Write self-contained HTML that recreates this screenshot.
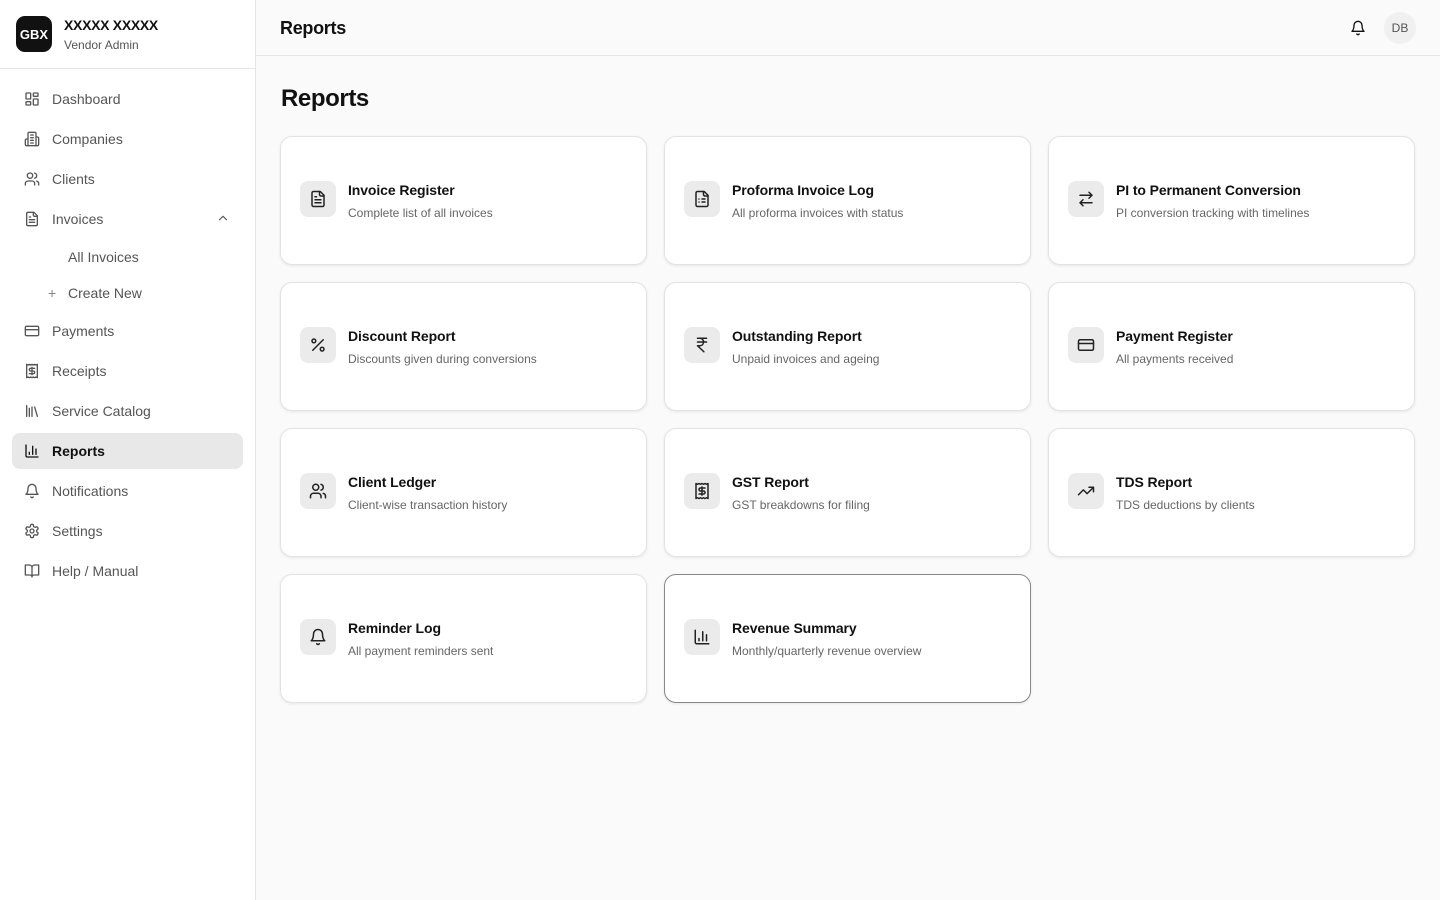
<!DOCTYPE html>
<html><head><meta charset="utf-8"><style>
*{box-sizing:border-box;margin:0;padding:0}
body{width:1440px;height:900px;font-family:"Liberation Sans",sans-serif;background:#fafafa;color:#111;position:relative;overflow:hidden}
.side{position:absolute;left:0;top:0;width:256px;height:900px;background:#fff;border-right:1px solid #e5e5e5}
.brand{height:69px;border-bottom:1px solid #e5e5e5;position:relative}
.logo{position:absolute;left:16px;top:16px;width:36px;height:36px;border-radius:9px;background:#111;color:#fff;font-weight:bold;font-size:13px;display:flex;align-items:center;justify-content:center}
.bn{position:absolute;left:64px;top:17px;font-size:14px;font-weight:bold;letter-spacing:-0.3px}
.br{position:absolute;left:64px;top:38px;font-size:12px;color:#555}
.nav{position:absolute;left:12px;width:231px;height:36px;border-radius:8px;display:flex;align-items:center;font-size:14px;color:#555}
.nav svg{position:absolute;left:12px;top:10px}
.nav span{position:absolute;left:40px}
.nav.act{background:#e8e8e8;color:#111;font-weight:bold}
svg{fill:none;stroke:currentColor;stroke-width:2;stroke-linecap:round;stroke-linejoin:round}
.top{position:absolute;left:256px;top:0;right:0;height:56px;border-bottom:1px solid #e5e5e5;background:#fafafa}
.top h1{position:absolute;left:24px;top:18px;font-size:18px;font-weight:bold;letter-spacing:-0.3px}
.av{position:absolute;left:1128px;top:12px;width:32px;height:32px;border-radius:50%;background:#f0f0f0;font-size:12px;color:#555;display:flex;align-items:center;justify-content:center}
h2{position:absolute;left:281px;top:85px;font-size:24px;font-weight:bold;letter-spacing:-0.4px}
.card{position:absolute;width:367px;height:129px;background:#fff;border:1px solid #e3e3e3;border-radius:12px;box-shadow:0 1px 3px rgba(0,0,0,.08)}
.card.h{border-color:#888}
.ic{position:absolute;left:19px;top:44px;width:36px;height:36px;border-radius:8px;background:#ebebeb;color:#222}
.ic svg{position:absolute;left:9px;top:9px}
.t{position:absolute;left:67px;top:45px;font-size:14px;font-weight:bold;color:#111;letter-spacing:-0.1px}
.d{position:absolute;left:67px;top:69px;font-size:12px;color:#666}
</style></head><body>
<div class="side">
<div class="brand"><div class="logo">GBX</div><div class="bn">XXXXX XXXXX</div><div class="br">Vendor Admin</div></div>
<div class="nav" style="top:81px"><svg width="16" height="16" viewBox="0 0 24 24"><rect x="3" y="3" width="7" height="9" rx="1"/><rect x="14" y="3" width="7" height="5" rx="1"/><rect x="14" y="12" width="7" height="9" rx="1"/><rect x="3" y="16" width="7" height="5" rx="1"/></svg><span>Dashboard</span></div>
<div class="nav" style="top:121px"><svg width="16" height="16" viewBox="0 0 24 24"><path d="M6 22V4a2 2 0 0 1 2-2h8a2 2 0 0 1 2 2v18Z"/><path d="M6 12H4a2 2 0 0 0-2 2v6a2 2 0 0 0 2 2h2M18 9h2a2 2 0 0 1 2 2v9a2 2 0 0 1-2 2h-2M10 6h4M10 10h4M10 14h4M10 18h4"/></svg><span>Companies</span></div>
<div class="nav" style="top:161px"><svg width="16" height="16" viewBox="0 0 24 24"><path d="M16 21v-2a4 4 0 0 0-4-4H6a4 4 0 0 0-4 4v2"/><circle cx="9" cy="7" r="4"/><path d="M22 21v-2a4 4 0 0 0-3-3.87M16 3.13a4 4 0 0 1 0 7.75"/></svg><span>Clients</span></div>
<div class="nav" style="top:201px"><svg width="16" height="16" viewBox="0 0 24 24"><path d="M15 2H6a2 2 0 0 0-2 2v16a2 2 0 0 0 2 2h12a2 2 0 0 0 2-2V7Z"/><path d="M14 2v4a2 2 0 0 0 2 2h4M10 9H8M16 13H8M16 17H8"/></svg><span>Invoices</span><svg style="left:204px" width="14" height="14" viewBox="0 0 24 24"><path d="m18 15-6-6-6 6"/></svg></div>
<div class="nav" style="top:239px"><span style="left:56px">All Invoices</span></div>
<div class="nav" style="top:275px"><span style="left:36px;color:#888">+</span><span style="left:56px">Create New</span></div>
<div class="nav" style="top:313px"><svg width="16" height="16" viewBox="0 0 24 24"><rect x="2" y="5" width="20" height="14" rx="2"/><path d="M2 10h20"/></svg><span>Payments</span></div>
<div class="nav" style="top:353px"><svg width="16" height="16" viewBox="0 0 24 24"><path d="M4 2v20l2-1 2 1 2-1 2 1 2-1 2 1 2-1 2 1V2l-2 1-2-1-2 1-2-1-2 1-2-1-2 1Z"/><path d="M16 8h-6a2 2 0 1 0 0 4h4a2 2 0 1 1 0 4H8M12 17.5v-11"/></svg><span>Receipts</span></div>
<div class="nav" style="top:393px"><svg width="16" height="16" viewBox="0 0 24 24"><path d="m16 6 4 14M12 6v14M8 8v12M4 4v16"/></svg><span>Service Catalog</span></div>
<div class="nav act" style="top:433px"><svg width="16" height="16" viewBox="0 0 24 24"><path d="M3 3v16a2 2 0 0 0 2 2h16M18 17V9M13 17V5M8 17v-3"/></svg><span>Reports</span></div>
<div class="nav" style="top:473px"><svg width="16" height="16" viewBox="0 0 24 24"><path d="M6 8a6 6 0 0 1 12 0c0 7 3 9 3 9H3s3-2 3-9M10.3 21a1.94 1.94 0 0 0 3.4 0"/></svg><span>Notifications</span></div>
<div class="nav" style="top:513px"><svg width="16" height="16" viewBox="0 0 24 24"><path d="M12.22 2h-.44a2 2 0 0 0-2 2v.18a2 2 0 0 1-1 1.73l-.43.25a2 2 0 0 1-2 0l-.15-.08a2 2 0 0 0-2.73.73l-.22.38a2 2 0 0 0 .73 2.730l.15.1a2 2 0 0 1 1 1.72v.51a2 2 0 0 1-1 1.74l-.15.09a2 2 0 0 0-.73 2.73l.22.38a2 2 0 0 0 2.73.73l.15-.08a2 2 0 0 1 2 0l.43.25a2 2 0 0 1 1 1.73V20a2 2 0 0 0 2 2h.44a2 2 0 0 0 2-2v-.18a2 2 0 0 1 1-1.73l.43-.25a2 2 0 0 1 2 0l.15.08a2 2 0 0 0 2.73-.73l.22-.39a2 2 0 0 0-.73-2.73l-.15-.08a2 2 0 0 1-1-1.74v-.5a2 2 0 0 1 1-1.74l.15-.09a2 2 0 0 0 .73-2.73l-.22-.38a2 2 0 0 0-2.73-.73l-.15.08a2 2 0 0 1-2 0l-.43-.25a2 2 0 0 1-1-1.73V4a2 2 0 0 0-2-2z"/><circle cx="12" cy="12" r="3"/></svg><span>Settings</span></div>
<div class="nav" style="top:553px"><svg width="16" height="16" viewBox="0 0 24 24"><path d="M2 3h6a4 4 0 0 1 4 4v14a3 3 0 0 0-3-3H2zM22 3h-6a4 4 0 0 0-4 4v14a3 3 0 0 1 3-3h7z"/></svg><span>Help / Manual</span></div>
</div>
<div class="top"><h1>Reports</h1>
<svg style="position:absolute;left:1094px;top:20px" width="16" height="16" viewBox="0 0 24 24"><path d="M6 8a6 6 0 0 1 12 0c0 7 3 9 3 9H3s3-2 3-9M10.3 21a1.94 1.94 0 0 0 3.4 0"/></svg>
<div class="av">DB</div></div>
<h2>Reports</h2>

<div class="card" style="left:280px;top:136px"><div class="ic"><svg width="18" height="18" viewBox="0 0 24 24"><path d="M15 2H6a2 2 0 0 0-2 2v16a2 2 0 0 0 2 2h12a2 2 0 0 0 2-2V7Z"/><path d="M14 2v4a2 2 0 0 0 2 2h4M10 9H8M16 13H8M16 17H8"/></svg></div><div class="t">Invoice Register</div><div class="d">Complete list of all invoices</div></div>
<div class="card" style="left:664px;top:136px"><div class="ic"><svg width="18" height="18" viewBox="0 0 24 24"><path d="M15 2H6a2 2 0 0 0-2 2v16a2 2 0 0 0 2 2h12a2 2 0 0 0 2-2V7Z"/><path d="M14 2v4a2 2 0 0 0 2 2h4M8 12h.01M12 12h4M8 16h.01M12 16h4"/></svg></div><div class="t">Proforma Invoice Log</div><div class="d">All proforma invoices with status</div></div>
<div class="card" style="left:1048px;top:136px"><div class="ic"><svg width="18" height="18" viewBox="0 0 24 24"><path d="m16 3 4 4-4 4M20 7H4M8 21l-4-4 4-4M4 17h16"/></svg></div><div class="t">PI to Permanent Conversion</div><div class="d">PI conversion tracking with timelines</div></div>

<div class="card" style="left:280px;top:282px"><div class="ic"><svg width="18" height="18" viewBox="0 0 24 24"><path d="M19 5 5 19"/><circle cx="6.5" cy="6.5" r="2.5"/><circle cx="17.5" cy="17.5" r="2.5"/></svg></div><div class="t">Discount Report</div><div class="d">Discounts given during conversions</div></div>
<div class="card" style="left:664px;top:282px"><div class="ic"><svg width="18" height="18" viewBox="0 0 24 24"><path d="M6 3h12M6 8h12M6 13l8.5 8M6 13h3M9 13c6.67 0 6.67-10 0-10"/></svg></div><div class="t">Outstanding Report</div><div class="d">Unpaid invoices and ageing</div></div>
<div class="card" style="left:1048px;top:282px"><div class="ic"><svg width="18" height="18" viewBox="0 0 24 24"><rect x="2" y="5" width="20" height="14" rx="2"/><path d="M2 10h20"/></svg></div><div class="t">Payment Register</div><div class="d">All payments received</div></div>

<div class="card" style="left:280px;top:428px"><div class="ic"><svg width="18" height="18" viewBox="0 0 24 24"><path d="M16 21v-2a4 4 0 0 0-4-4H6a4 4 0 0 0-4 4v2"/><circle cx="9" cy="7" r="4"/><path d="M22 21v-2a4 4 0 0 0-3-3.87M16 3.13a4 4 0 0 1 0 7.75"/></svg></div><div class="t">Client Ledger</div><div class="d">Client-wise transaction history</div></div>
<div class="card" style="left:664px;top:428px"><div class="ic"><svg width="18" height="18" viewBox="0 0 24 24"><path d="M4 2v20l2-1 2 1 2-1 2 1 2-1 2 1 2-1 2 1V2l-2 1-2-1-2 1-2-1-2 1-2-1-2 1Z"/><path d="M16 8h-6a2 2 0 1 0 0 4h4a2 2 0 1 1 0 4H8M12 17.5v-11"/></svg></div><div class="t">GST Report</div><div class="d">GST breakdowns for filing</div></div>
<div class="card" style="left:1048px;top:428px"><div class="ic"><svg width="18" height="18" viewBox="0 0 24 24"><path d="m22 7-8.5 8.5-5-5L2 17M16 7h6v6"/></svg></div><div class="t">TDS Report</div><div class="d">TDS deductions by clients</div></div>

<div class="card" style="left:280px;top:574px"><div class="ic"><svg width="18" height="18" viewBox="0 0 24 24"><path d="M6 8a6 6 0 0 1 12 0c0 7 3 9 3 9H3s3-2 3-9M10.3 21a1.94 1.94 0 0 0 3.4 0"/></svg></div><div class="t">Reminder Log</div><div class="d">All payment reminders sent</div></div>
<div class="card h" style="left:664px;top:574px"><div class="ic"><svg width="18" height="18" viewBox="0 0 24 24"><path d="M3 3v16a2 2 0 0 0 2 2h16M18 17V9M13 17V5M8 17v-3"/></svg></div><div class="t">Revenue Summary</div><div class="d">Monthly/quarterly revenue overview</div></div>
</body></html>
